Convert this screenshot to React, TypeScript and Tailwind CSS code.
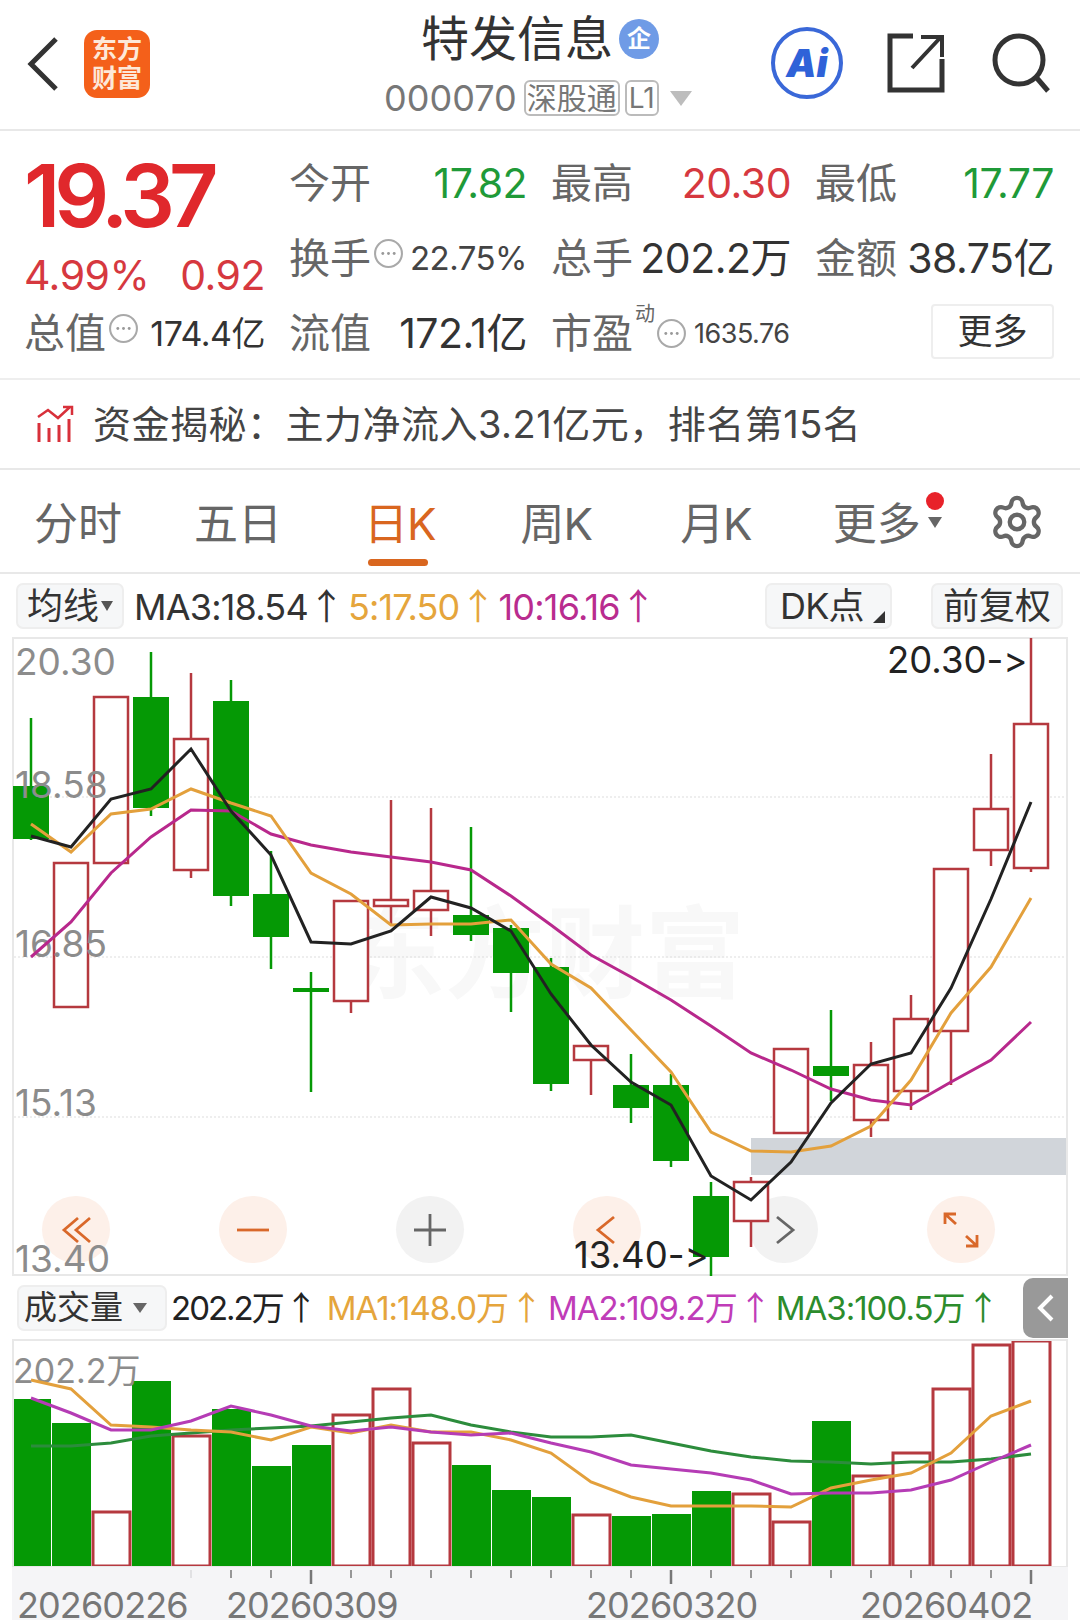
import React from 'react';
import {Settings} from 'lucide-react';

const FONT = "[font-family:Inter,'Noto_Sans_CJK_SC',sans-serif] [font-variant-ligatures:none]";
const RED = '#b5393f';
const GREEN = '#059905';

// page coordinates: wick top, wick bottom, body top, body bottom
const candles: {up: boolean; w: number[]; b: number[]}[] = [
  {up: false, w: [718, 840], b: [786, 839]},
  {up: true, w: [863, 863], b: [863, 1007]},
  {up: true, w: [697, 697], b: [697, 863]},
  {up: false, w: [652, 816], b: [697, 808]},
  {up: true, w: [673, 878], b: [739, 870]},
  {up: false, w: [680, 906], b: [701, 896]},
  {up: false, w: [851, 969], b: [894, 937]},
  {up: false, w: [972, 1092], b: [988, 992]},
  {up: true, w: [900, 1013], b: [901, 1001]},
  {up: true, w: [800, 925], b: [900, 906]},
  {up: true, w: [808, 936], b: [891, 910]},
  {up: false, w: [827, 941], b: [915, 935]},
  {up: false, w: [925, 1012], b: [928, 973]},
  {up: false, w: [958, 1091], b: [967, 1084]},
  {up: true, w: [1045, 1095], b: [1046, 1060]},
  {up: false, w: [1054, 1123], b: [1085, 1108]},
  {up: false, w: [1074, 1167], b: [1085, 1161]},
  {up: false, w: [1182, 1276], b: [1196, 1257]},
  {up: true, w: [1177, 1247], b: [1182, 1221]},
  {up: true, w: [1049, 1049], b: [1049, 1133]},
  {up: false, w: [1010, 1101], b: [1066, 1076]},
  {up: true, w: [1042, 1137], b: [1065, 1120]},
  {up: true, w: [995, 1110], b: [1019, 1091]},
  {up: true, w: [869, 1085], b: [869, 1031]},
  {up: true, w: [754, 866], b: [809, 850]},
  {up: true, w: [638, 872], b: [724, 868]},
];

const kBlack = [836, 847, 799, 789, 749, 811, 855, 942, 944, 931, 897, 908, 931, 994, 1045, 1082, 1105, 1176, 1200, 1162, 1103, 1064, 1053, 988, 899, 802];
const kOrange = [824, 852, 814, 809, 789, 803, 816, 873, 894, 925, 924, 924, 920, 964, 988, 1030, 1072, 1132, 1151, 1152, 1146, 1126, 1080, 1013, 967, 898];
const kPurple = [957, 922, 873, 837, 810, 811, 834, 845, 852, 857, 862, 870, 896, 925, 955, 977, 1000, 1026, 1053, 1070, 1089, 1100, 1105, 1082, 1060, 1022];

const vol = [
  [false, 1399], [false, 1423], [true, 1512], [false, 1381], [true, 1436], [false, 1409], [false, 1466], [false, 1445], [true, 1415], [true, 1389], [true, 1443], [false, 1465], [false, 1490],
  [false, 1497], [true, 1515], [false, 1516], [false, 1514], [false, 1491], [true, 1494], [true, 1522], [false, 1421], [true, 1476], [true, 1453], [true, 1389], [true, 1345], [true, 1341],
] as [boolean, number][];

const vOrange = [1380, 1389, 1425, 1427, 1430, 1432, 1440, 1427, 1433, 1425, 1432, 1432, 1440, 1453, 1482, 1497, 1506, 1506, 1506, 1507, 1488, 1480, 1473, 1453, 1416, 1401];
const vPurple = [1398, 1413, 1430, 1430, 1421, 1406, 1415, 1426, 1431, 1427, 1432, 1435, 1433, 1443, 1452, 1465, 1469, 1473, 1480, 1494, 1493, 1493, 1490, 1480, 1462, 1445];
const vGreen = [1446, 1446, 1443, 1436, 1433, 1430, 1428, 1426, 1422, 1418, 1415, 1425, 1432, 1437, 1437, 1435, 1443, 1451, 1457, 1461, 1462, 1464, 1462, 1462, 1459, 1454];

const cx = (i: number) => 31 + 40 * i;
const pts = (a: number[]) => a.map((y, i) => `${cx(i)},${y}`).join(' ');

const MoreDot = ({className}: {className: string}) => (
  <svg viewBox="0 0 30 30" className={className}>
    <circle cx="15" cy="15" r="13" fill="none" stroke="#a9a9a9" strokeWidth="2"/>
    <circle cx="9.5" cy="15" r="1.4" fill="#999"/>
    <circle cx="15" cy="15" r="1.4" fill="#999"/>
    <circle cx="20.5" cy="15" r="1.4" fill="#999"/>
  </svg>
);

const Up = () => (
  <span className="ml-[8px] inline-flex w-[21px] justify-center font-['Noto_Sans_CJK_SC',sans-serif] tracking-normal">↑</span>
);

const Header = () => (
  <header className="flex h-[131px] border-b-2 border-[#e8e8e8] pl-[27px] pr-[29px]">
    <svg viewBox="0 0 31 54" className="mt-[37px] h-[54px] w-[31px]" fill="none" stroke="#333" strokeWidth="5">
      <path d="M29 2 L4 27 L29 52"/>
    </svg>
    <div className="ml-[26px] mt-[30px] flex h-[68px] w-[66px] flex-col items-center justify-center rounded-[13px] bg-[#f4601a] text-[25px] font-bold leading-[29px] text-[#fde8d8]">
      <span>东方</span>
      <span>财富</span>
    </div>
    <div className="ml-[234px] flex flex-col">
      <div className="ml-[37px] mt-[10px] flex items-center">
        <span className="text-[48px] leading-[58px] text-[#333]">特发信息</span>
        <span className="ml-[6px] flex h-[40px] w-[40px] items-center justify-center rounded-full bg-[#6f9be6] text-[24px] font-bold text-white">企</span>
      </div>
      <div className="mt-[8px] flex items-center">
        <span className="text-[36px] leading-[44px] text-[#777]">000070</span>
        <span className="ml-[7px] rounded-[6px] border-2 border-[#bbb] px-[1px] text-[30px] leading-[32px] text-[#777]">深股通</span>
        <span className="ml-[5px] rounded-[6px] border-2 border-[#bbb] px-[2px] text-[28px] leading-[32px] text-[#777]">L1</span>
        <span className="ml-[11px] h-0 w-0 border-x-[11px] border-t-[15px] border-x-transparent border-t-[#bdbdbd]"/>
      </div>
    </div>
    <div className="ml-auto mt-[27px] flex h-[72px] items-center">
      <div className="flex h-[72px] w-[72px] items-center justify-center rounded-full border-[4px] border-[#3a68d8] text-[38px] font-black italic text-[#2f62d8]">Ai</div>
      <svg viewBox="0 0 58 60" className="ml-[44px] h-[60px] w-[58px]" fill="none" stroke="#333" strokeWidth="5">
        <path d="M26 3 H3 V57 H55 V26"/>
        <path d="M25 35 L53 5 M34 4 H55 V24" strokeWidth="4"/>
      </svg>
      <svg viewBox="0 0 60 60" className="ml-[46px] h-[60px] w-[60px]" fill="none" stroke="#333" strokeWidth="5">
        <circle cx="28" cy="27" r="24"/>
        <path d="M45 44 L57 58"/>
      </svg>
    </div>
  </header>
);

const Stat = ({label, value, color}: {label: string; value: string; color: string}) => (
  <div className="flex items-center justify-between">
    <span className="text-[41px] text-[#666]">{label}</span>
    <span className={`text-[41px] tracking-[-0.5px] ${color}`}>{value}</span>
  </div>
);

const Quote = () => (
  <section className="grid h-[249px] grid-cols-[241px_238px_240px_239px] grid-rows-[75px_75px_75px] gap-x-[24px] border-b-2 border-[#eeeeee] pl-[24px] pt-[15px] leading-none">
    <div className="row-span-2 flex flex-col">
      <span className="mt-[6px] text-[86px] font-semibold leading-[88px] tracking-[-6px] text-[#e0282c]">19.37</span>
      <div className="mt-[13px] flex justify-between text-[41px] leading-[44px] tracking-[-0.5px] text-[#d6383f]">
        <span>4.99%</span>
        <span>0.92</span>
      </div>
    </div>
    <Stat label="今开" value="17.82" color="text-[#1f9a38]"/>
    <Stat label="最高" value="20.30" color="text-[#d6383f]"/>
    <Stat label="最低" value="17.77" color="text-[#1f9a38]"/>
    <div className="col-start-2 flex items-center justify-between">
      <span className="flex items-center text-[41px] text-[#666]">换手<MoreDot className="-mt-[10px] ml-[2px] h-[31px] w-[31px]"/></span>
      <span className="text-[33px] tracking-[-0.5px] text-[#444]">22.75%</span>
    </div>
    <Stat label="总手" value="202.2万" color="text-[#333]"/>
    <Stat label="金额" value="38.75亿" color="text-[#333]"/>
    <div className="flex items-center justify-between">
      <span className="flex items-center text-[41px] text-[#666]">总值<MoreDot className="-mt-[10px] ml-[2px] h-[31px] w-[31px]"/></span>
      <span className="text-[34px] tracking-[-0.5px] text-[#333]">174.4亿</span>
    </div>
    <Stat label="流值" value="172.1亿" color="text-[#333]"/>
    <div className="flex items-center">
      <span className="text-[41px] text-[#666]">市盈</span>
      <span className="-mt-[40px] ml-[2px] text-[20px] text-[#666]">动</span>
      <MoreDot className="ml-[1px] h-[31px] w-[31px]"/>
      <span className="ml-[7px] text-[27px] tracking-[-0.5px] text-[#444]">1635.76</span>
    </div>
    <div className="-mt-[5px] flex items-center justify-end">
      <button className="h-[55px] w-[123px] rounded-[4px] border-2 border-[#eeeeee] text-[35px] text-[#333]">更多</button>
    </div>
  </section>
);

const FundBar = () => (
  <section className="flex h-[90px] items-center border-b-2 border-[#e8e8e8] pl-[36px]">
    <svg viewBox="0 0 40 38" className="h-[38px] w-[40px]" fill="none" stroke="#d8303a" strokeWidth="3">
      <path d="M3 37 V18 M13 37 V23 M23 37 V20 M33 37 V14"/>
      <path d="M2 12 L12 5 L22 13 L34 2 M27 2 H36 V10" strokeWidth="2.5"/>
    </svg>
    <span className="ml-[17px] text-[38px] tracking-[0.5px] text-[#444]">资金揭秘：主力净流入3.21亿元，排名第15名</span>
  </section>
);

const tabClass = 'text-[44px] leading-[50px] text-[#666]';

const Tabs = () => (
  <nav className="flex h-[104px] border-b-2 border-[#e8e8e8] pl-[34px]">
    <span className={`mt-[29px] ${tabClass}`}>分时</span>
    <span className={`ml-[72px] mt-[29px] ${tabClass}`}>五日</span>
    <div className="ml-[86px] flex flex-col">
      <span className="-ml-[4px] mt-[29px] text-[44px] leading-[50px] tracking-[-1px] text-[#d9661f]">日K</span>
      <span className="mt-[10px] h-[7px] w-[60px] rounded-full bg-[#d9661f]"/>
    </div>
    <span className={`ml-[85px] mt-[29px] tracking-[-1px] ${tabClass}`}>周K</span>
    <span className={`ml-[88px] mt-[29px] tracking-[-1px] ${tabClass}`}>月K</span>
    <span className={`ml-[81px] mt-[29px] ${tabClass}`}>更多</span>
    <div className="ml-[5px] flex w-[18px] flex-col items-center pt-[22px]">
      <span className="h-[18px] w-[18px] rounded-full bg-[#e8222a]"/>
      <span className="mt-[7px] h-0 w-0 border-x-[7px] border-t-[11px] border-x-transparent border-t-[#666]"/>
    </div>
    <Settings className="ml-[44px] mt-[23px] h-[58px] w-[58px] text-[#666]" strokeWidth={1.8}/>
  </nav>
);

const Pill = ({className, children}: {className: string; children: React.ReactNode}) => (
  <div className={`flex items-center rounded-[7px] border-2 border-[#eeeeee] bg-[#f6f7f8] text-[#333] ${className}`}>{children}</div>
);

const MaBar = () => (
  <div className="flex h-[63px] items-center pl-[16px] pr-[17px] text-[36px] tracking-[-0.8px]">
    <Pill className="h-[46px] w-[108px] pl-[9px]">
      <span className="tracking-normal">均线</span>
      <span className="ml-[2px] h-0 w-0 border-x-[6px] border-t-[10px] border-x-transparent border-t-[#555]"/>
    </Pill>
    <span className="ml-[10px] text-[#333]">MA3:18.54<Up/></span>
    <span className="ml-[11px] text-[#e5a53c]">5:17.50<Up/></span>
    <span className="ml-[10px] text-[#b92c8f]">10:16.16<Up/></span>
    <Pill className="relative ml-auto h-[46px] w-[127px] pl-[13px]">
      <span>DK点</span>
      <span className="absolute bottom-[4px] right-[5px] h-0 w-0 border-b-[12px] border-l-[12px] border-b-[#333] border-l-transparent"/>
    </Pill>
    <Pill className="ml-[39px] h-[46px] w-[132px] justify-center">
      <span className="tracking-normal">前复权</span>
    </Pill>
  </div>
);

const RoundBtn = ({tone, children}: {tone: 'warm' | 'cool'; children: React.ReactNode}) => (
  <div className={`flex h-[67px] w-[68px] items-center justify-center rounded-full ${tone === 'warm' ? 'bg-[#fdf0e9]' : 'bg-[#f2f2f2]'}`}>
    <svg viewBox="0 0 40 40" className="h-[40px] w-[40px]" fill="none" stroke={tone === 'warm' ? '#d9682a' : '#666'} strokeWidth="2.8">
      {children}
    </svg>
  </div>
);

const KChart = () => (
  <div className="relative ml-[12px] h-[639px] w-[1056px] border-2 border-[#e8e8e8]">
    <div className="absolute left-[28px] top-[557px] flex gap-[109px]">
      <RoundBtn tone="warm"><path d="M22 8 L8 20 L22 32 M34 8 L20 20 L34 32"/></RoundBtn>
      <RoundBtn tone="warm"><path d="M4 20 H36"/></RoundBtn>
      <RoundBtn tone="cool"><path d="M4 20 H36 M20 4 V36"/></RoundBtn>
      <RoundBtn tone="warm"><path d="M27 7 L11 20 L27 33"/></RoundBtn>
      <RoundBtn tone="cool"><path d="M13 7 L29 20 L13 33"/></RoundBtn>
      <RoundBtn tone="warm"><path d="M4 4 L15 14 M4 14 V4 H15 M36 36 L25 26 M36 25 V36 H25"/></RoundBtn>
    </div>
    <svg viewBox="14 639 1052 635" overflow="visible" className="relative block h-[635px] w-[1052px] overflow-visible">
      <text x="345" y="990" fontSize="100" fontWeight="700" fill="#f8f8f8" className={FONT}>东方财富</text>
      {[797, 957, 1117].map((y) => (
        <line key={y} x1="14" x2="1066" y1={y} y2={y} stroke="#dddddd" strokeWidth="1" strokeDasharray="2 2"/>
      ))}
      <rect x="751" y="1138" width="315" height="37" fill="#d1d5da"/>
      {candles.map((c, i) => {
        const color = c.up ? RED : GREEN;
        return (
          <g key={i}>
            <line x1={cx(i)} x2={cx(i)} y1={c.w[0]} y2={c.w[1]} stroke={color} strokeWidth="2.5"/>
            {c.up
              ? <rect x={cx(i) - 17} y={c.b[0]} width="34" height={c.b[1] - c.b[0]} fill="#fff" stroke={RED} strokeWidth="2.5"/>
              : <rect x={cx(i) - 18} y={c.b[0]} width="36" height={c.b[1] - c.b[0]} fill={GREEN}/>}
          </g>
        );
      })}
      {[['20.30', 675], ['18.58', 798], ['16.85', 957], ['15.13', 1116], ['13.40', 1272]].map(([t, y]) => (
        <text key={t} x="15" y={y} fontSize="37" fill="#8c8c8c" className={FONT}>{t}</text>
      ))}
      <polyline points={pts(kPurple)} fill="none" stroke="#b8288c" strokeWidth="3"/>
      <polyline points={pts(kOrange)} fill="none" stroke="#e3a03c" strokeWidth="3"/>
      <polyline points={pts(kBlack)} fill="none" stroke="#222" strokeWidth="3"/>
      <text x="887" y="673" fontSize="36.5" fill="#222" className={FONT}>20.30-&gt;</text>
      <text x="574" y="1268" fontSize="36.5" fill="#222" className={FONT}>13.40-&gt;</text>
    </svg>
  </div>
);

const VolBar = () => (
  <div className="relative flex h-[63px] items-center pl-[17px] text-[33px] tracking-[-1px]">
    <Pill className="h-[46px] w-[150px] pl-[5px]">
      <span className="tracking-normal">成交量</span>
      <span className="ml-[10px] h-0 w-0 border-x-[7px] border-t-[10px] border-x-transparent border-t-[#666]"/>
    </Pill>
    <span className="ml-[4px] tracking-[-2px] text-[#222]">202.2万<Up/></span>
    <span className="ml-[15px] text-[#e5a53c]">MA1:148.0万<Up/></span>
    <span className="ml-[11px] text-[#c03cb8]">MA2:109.2万<Up/></span>
    <span className="ml-[10px] text-[#2c8c2c]">MA3:100.5万<Up/></span>
    <div className="absolute bottom-[1px] left-[1023px] flex h-[60px] w-[45px] items-center justify-center rounded-l-[10px] bg-[#999999]">
      <svg viewBox="0 0 20 30" className="h-[30px] w-[20px]" fill="none" stroke="#fff" strokeWidth="4">
        <path d="M16 3 L4 15 L16 27"/>
      </svg>
    </div>
  </div>
);

const VolChart = () => (
  <div className="ml-[12px] h-[228px] w-[1056px] border-x-2 border-t-2 border-[#e8e8e8]">
    <svg viewBox="14 1341 1052 226" className="block h-[226px] w-[1052px]">
      {vol.map(([up, top], i) => up
        ? <rect key={i} x={cx(i) - 18} y={top} width="37" height={1566 - top} fill="#fff" stroke={RED} strokeWidth="3"/>
        : <rect key={i} x={cx(i) - 19} y={top} width="39" height={1566 - top} fill={GREEN}/>)}
      <line x1="14" x2="1066" y1="1566.5" y2="1566.5" stroke="#e8e8e8"/>
      <text x="13" y="1383" fontSize="34" fill="#8c8c8c" className={FONT}>202.2万</text>
      <polyline points={pts(vGreen)} fill="none" stroke="#2c8c3c" strokeWidth="3"/>
      <polyline points={pts(vOrange)} fill="none" stroke="#e3a03c" strokeWidth="3"/>
      <polyline points={pts(vPurple)} fill="none" stroke="#b53cb5" strokeWidth="3"/>
    </svg>
  </div>
);

const DateAxis = () => (
  <div className="ml-[12px] w-[1056px] bg-[#f5f5f7]">
    <svg viewBox="12 1567 1056 53" className="block h-[53px] w-[1056px]">
      {candles.map((_, i) => {
        if (i < 4) return null;
        const major = i === 7 || i === 16 || i === 25;
        return <line key={i} x1={cx(i)} x2={cx(i)} y1="1570" y2={major ? 1584 : 1578} stroke="#777" strokeWidth={major ? 2.5 : 1.5} opacity={i === 4 ? 0.2 : 1}/>;
      })}
      {[['20260226', 17], ['20260309', 226], ['20260320', 586], ['20260402', 860]].map(([t, x]) => (
        <text key={t} x={x} y="1618" fontSize="36" letterSpacing="-0.9" fill="#777" className={FONT}>{t}</text>
      ))}
    </svg>
  </div>
);

export default function App() {
  return (
    <div className={`h-[1620px] w-[1080px] overflow-hidden bg-white ${FONT}`}>
      <Header/>
      <Quote/>
      <FundBar/>
      <Tabs/>
      <MaBar/>
      <KChart/>
      <VolBar/>
      <VolChart/>
      <DateAxis/>
    </div>
  );
}
